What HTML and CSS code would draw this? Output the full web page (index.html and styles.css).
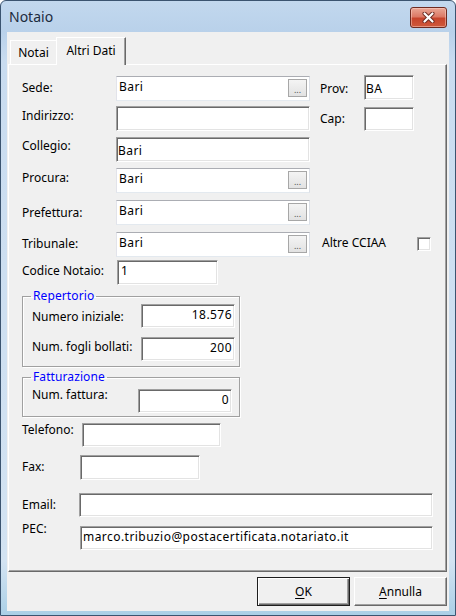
FILE: index.html
```html
<!DOCTYPE html>
<html lang="it">
<head>
<meta charset="utf-8">
<title>Notaio</title>
<link rel="stylesheet" href="styles.css">
</head>
<body>
<div class="window">
  <div class="titlebar">
    <span class="title">Notaio</span>
    <div class="close">
      <svg width="13" height="11" viewBox="0 0 13 11">
        <path d="M2.5 1.5 L10.5 9.5 M10.5 1.5 L2.5 9.5" stroke="#6b2a20" stroke-width="4" stroke-linecap="round"/>
        <path d="M2.5 1.5 L10.5 9.5 M10.5 1.5 L2.5 9.5" stroke="#ffffff" stroke-width="2.2" stroke-linecap="round"/>
      </svg>
    </div>
  </div>
  <div class="client">
    <div class="tabs">
      <div class="tab">Notai</div>
      <div class="tab active">Altri Dati</div>
    </div>
    <div class="panel">
      <div class="row r-sede">
        <span class="lbl lw-main lt-4">Sede:</span>
        <div class="combo wide"><span class="ctext">Bari</span><span class="dots">...</span></div>
        <span class="lbl lw-prov lt-5 side">Prov:</span>
        <div class="box small low prov">BA</div>
      </div>
      <div class="row r-ind">
        <span class="lbl lw-main lt-2">Indirizzo:</span>
        <div class="box wide"></div>
        <span class="lbl lw-prov lt-5 side">Cap:</span>
        <div class="box small cap"></div>
      </div>
      <div class="row r-coll">
        <span class="lbl lw-main lt-1">Collegio:</span>
        <div class="box wide low">Bari</div>
      </div>
      <div class="row r-proc">
        <span class="lbl lw-main lt-2">Procura:</span>
        <div class="combo wide"><span class="ctext">Bari</span><span class="dots">...</span></div>
      </div>
      <div class="row r-pref">
        <span class="lbl lw-main lt-5">Prefettura:</span>
        <div class="combo wide"><span class="ctext">Bari</span><span class="dots">...</span></div>
      </div>
      <div class="row r-trib">
        <span class="lbl lw-main lt-4">Tribunale:</span>
        <div class="combo wide"><span class="ctext">Bari</span><span class="dots">...</span></div>
        <span class="lbl lw-cciaa lt-3 side2">Altre CCIAA</span>
        <span class="check"></span>
      </div>
      <div class="row r-cod">
        <span class="lbl lw-cod lt-3">Codice Notaio:</span>
        <div class="box codice">1</div>
      </div>
      <fieldset class="group g-rep">
        <legend>Repertorio</legend>
        <div class="row">
          <span class="lbl lw-rep lt-5">Numero iniziale:</span>
          <div class="box numbox num">18.576</div>
        </div>
        <div class="row r-fogli">
          <span class="lbl lw-rep lt-2">Num. fogli bollati:</span>
          <div class="box numbox num">200</div>
        </div>
      </fieldset>
      <fieldset class="group g-fat">
        <legend>Fatturazione</legend>
        <div class="row">
          <span class="lbl lw-fat lt-n2">Num. fattura:</span>
          <div class="box numbox num">0</div>
        </div>
      </fieldset>
      <div class="row r-tel">
        <span class="lbl lw-tel lt-n1">Telefono:</span>
        <div class="box tel h24"></div>
      </div>
      <div class="row r-fax">
        <span class="lbl lw-fax lt-4">Fax:</span>
        <div class="box fax"></div>
      </div>
      <div class="row r-email">
        <span class="lbl lw-email lt-4">Email:</span>
        <div class="box email h24"></div>
      </div>
      <div class="row r-pec">
        <span class="lbl lw-pec lt-n5">PEC:</span>
        <div class="box pec h24">marco.tribuzio@postacertificata.notariato.it</div>
      </div>
    </div>
    <div class="buttons">
      <button class="btn default"><u>O</u>K</button>
      <button class="btn"><u>A</u>nnulla</button>
    </div>
  </div>
</div>
</body>
</html>
```
FILE: styles.css
```css
* { box-sizing: border-box; }
html, body { margin: 0; padding: 0; background: #ffffff; }
body { font-family: "Noto Sans", "Liberation Sans", sans-serif; font-size: 12px; color: #000; }

.window {
  width: 456px;
  height: 616px;
  display: flex;
  flex-direction: column;
  border: 1px solid #3b5470;
  border-radius: 6px 6px 0 0;
  padding: 0 6px 4px 6px;
  background: linear-gradient(#c2d8ee 0, #b9d1ea 31px, #c9dcf0 60px, #d3e3f2 560px, #a9cfe6 616px);
}

.titlebar {
  height: 31px;
  flex: none;
  display: flex;
  justify-content: space-between;
  align-items: flex-start;
  padding: 6px 2px 0 2px;
}
.title {
  font-size: 14px;
  line-height: 18px;
  margin-top: 1px;
  color: #1c2b3d;
}
.close {
  width: 37px;
  height: 21px;
  border: 1px solid #6e2b21;
  border-radius: 3px;
  background: linear-gradient(#eaa795 0, #dc7a66 45%, #c7442c 55%, #cf5a3c 100%);
  box-shadow: inset 0 0 0 1px rgba(255, 220, 210, 0.45);
  display: flex;
  align-items: center;
  justify-content: center;
}

.client {
  flex: 1;
  background: #f0f0f0;
  padding: 0 2px 5px 1px;
  display: flex;
  flex-direction: column;
}

.tabs {
  height: 32px;
  flex: none;
  display: flex;
  align-items: flex-end;
  padding-left: 2px;
}
.tab {
  width: 46px;
  height: 24px;
  text-align: center;
  line-height: 16px;
  padding-top: 4px;
  border-top: 1px solid #ffffff;
  border-left: 1px solid #ffffff;
  background: #f0f0f0;
}
.tab.active {
  width: 70px;
  height: 28px;
  margin-bottom: -1px;
  position: relative;
  z-index: 1;
  padding-top: 5px;
  border-right: 1px solid #696969;
  box-shadow: inset -1px 0 #a0a0a0;
}

.panel {
  height: 508px;
  flex: none;
  border: 1px solid;
  border-color: #ffffff #696969 #696969 #ffffff;
  box-shadow: inset -1px -1px #a0a0a0;
  padding: 11px 0 0 13px;
}

.row {
  display: flex;
  align-items: flex-start;
}
.lbl {
  flex: none;
  line-height: 16px;
  white-space: nowrap;
}
.lt-5 { margin-top: 5px; }
.lt-4 { margin-top: 4px; }
.lt-3 { margin-top: 3px; }
.lt-2 { margin-top: 2px; }
.lt-1 { margin-top: 1px; }
.lt-n1 { margin-top: -1px; }
.lt-n2 { margin-top: -2px; }
.lt-n5 { margin-top: -5px; }

.lw-main { width: 94px; }
.lw-prov { width: 44px; }
.lw-cciaa { width: 95px; }
.lw-cod { width: 95px; }
.lw-rep { width: 109px; }
.lw-fat { width: 106px; }
.lw-tel { width: 60px; }
.lw-fax { width: 58px; }
.lw-email { width: 57px; }
.lw-pec { width: 58px; }
.side { margin-left: 10px; }
.side2 { margin-left: 12px; }

.box {
  flex: none;
  height: 25px;
  background: #ffffff;
  border: 1px solid;
  border-color: #a0a0a0 #ffffff #ffffff #a0a0a0;
  box-shadow: inset 1px 1px #696969, inset -1px -1px #e3e3e3;
  padding: 2px 2px 0 2px;
  line-height: 16px;
  letter-spacing: 0.45px;
  white-space: nowrap;
  overflow: hidden;
}
.box.low { padding-top: 5px; padding-left: 1px; }
.h24 { height: 24px; }
.wide { width: 194px; }
.small { width: 50px; height: 24px; }
.prov { margin-top: -1px; height: 25px; }
.cap { margin-top: 1px; }
.codice { width: 101px; padding-left: 3px; }
.numbox { width: 94px; height: 24px; }
.num { text-align: right; padding-right: 2px; padding-top: 2px; }
.tel { width: 139px; }
.fax { width: 120px; }
.email { width: 354px; }
.pec { width: 353px; padding-left: 2px; }

.combo {
  flex: none;
  height: 25px;
  display: flex;
  align-items: flex-start;
  background: #ffffff;
  border: 1px solid;
  border-color: #abadb3 #dbdfe6 #e3e9ef #e2e3ea;
}
.ctext {
  flex: 1;
  padding: 2px 0 0 2px;
  line-height: 16px;
  letter-spacing: 0.45px;
}
.dots {
  flex: none;
  width: 19px;
  height: 18px;
  margin: 2px 2px 0 0;
  border: 1px solid #a7a7a7;
  background: linear-gradient(#f4f4f4, #e2e2e2);
  font-size: 9px;
  line-height: 10px;
  padding-top: 5px;
  text-align: center;
  color: #555555;
  letter-spacing: 0;
}

.check {
  flex: none;
  width: 14px;
  height: 14px;
  margin-top: 5px;
  background: #ffffff;
  border: 1px solid;
  border-color: #a0a0a0 #ffffff #ffffff #a0a0a0;
  box-shadow: inset 1px 1px #696969, inset -1px -1px #e3e3e3;
}

.r-ind { margin-top: 5px; }
.r-coll { margin-top: 6px; }
.r-proc { margin-top: 6px; }
.r-pref { margin-top: 7px; }
.r-trib { margin-top: 7px; }
.r-cod { margin-top: 3px; }
.r-cod .box { height: 25px; }
.r-fogli { margin-top: 9px; }
.r-tel { margin-top: 6px; }
.r-fax { margin-top: 8px; }
.r-email { margin-top: 13px; }
.r-pec { margin-top: 9px; }

.group {
  width: 218px;
  margin: 0;
  min-width: 0;
  border: 1px solid #a0a0a0;
  box-shadow: inset 1px 1px #ffffff, 1px 1px #ffffff;
  padding: 0 0 5px 9px;
}
.group legend {
  padding: 0 2px;
  margin-left: -1px;
  line-height: 16px;
  color: #0000ff;
  letter-spacing: 0.1px;
}
.g-rep { margin-top: 3px; }
.g-fat { margin-top: 2px; padding-top: 4px; padding-bottom: 3px; }

.buttons {
  margin-top: 5px;
  display: flex;
  justify-content: flex-end;
  gap: 4px;
}
.btn {
  width: 93px;
  height: 29px;
  font-family: "Noto Sans", "Liberation Sans", sans-serif;
  font-size: 12px;
  color: #000;
  background: #f0f0f0;
  border: 1px solid;
  border-color: #ffffff #696969 #696969 #ffffff;
  box-shadow: inset -1px -1px #a0a0a0;
  padding: 0;
}
.btn.default {
  border: 1px solid #1e1e1e;
  box-shadow: inset 1px 1px #ffffff, inset -1px -1px #696969, inset -2px -2px #a0a0a0;
}
.btn u { text-underline-offset: 2px; }
```
